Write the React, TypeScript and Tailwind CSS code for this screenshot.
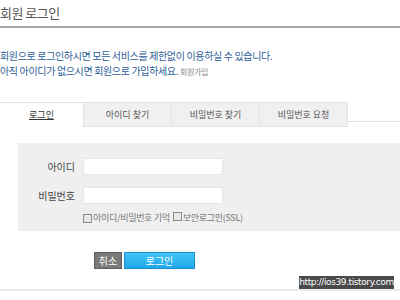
const font = "font-['Noto_Sans_CJK_KR','Noto_Sans',sans-serif]";

const tabs = [
    { label: '로그인', w: 'w-[84px]' },
    { label: '아이디 찾기', w: 'w-[88px]' },
    { label: '비밀번호 찾기', w: 'w-[88px]' },
    { label: '비밀번호 요청', w: 'w-[88px]' },
];

const CheckBox = () => (
    <span className="inline-block w-[9px] h-[9px] border border-[#8a8a8a] bg-[#e8e8e8] mr-[1px]"></span>
);

const App = () => {
    return (
        <div className={`relative w-[400px] h-[300px] overflow-hidden bg-white ${font}`}>
            {/* header */}
            <div className="h-[28px] flex items-center border-b-2 border-[#a6a6a6] text-[13px] tracking-[-0.5px] text-[#555]">
                회원 로그인
            </div>

            {/* intro */}
            <div className="mt-[20px] text-[10px] leading-[15px] tracking-[-0.35px] text-[#2c5d97] whitespace-nowrap">
                <p>회원으로 로그인하시면 모든 서비스를 제한없이 이용하실 수 있습니다.</p>
                <p>
                    아직 아이디가 없으시면 회원으로 가입하세요.{' '}
                    <span className="text-[8px] text-[#888]">회원가입</span>
                </p>
            </div>

            {/* tabs */}
            <div className="mt-[23px] flex items-start h-[25px]">
                {tabs.map((t, i) => (
                    <div
                        key={t.label}
                        className={
                            i === 0
                                ? `${t.w} h-[25px] flex items-center justify-center border-t border-r border-[#e2e2e2] bg-white text-[9px] text-[#333] underline`
                                : `${t.w} h-[25px] flex items-center justify-center border-t border-r border-b border-[#e2e2e2] bg-[#f0f0f0] text-[9px] text-[#555]`
                        }
                    >
                        {t.label}
                    </div>
                ))}
                <div className="flex-1 h-[20px] border-b border-[#e2e2e2]"></div>
            </div>

            {/* form panel */}
            <div className="mt-[16px] ml-[18px] h-[88px] bg-[#efefef] pt-[15px] text-[10px] text-[#444]">
                <div className="flex items-center h-[17px]">
                    <span className="w-[57px] text-right">아이디</span>
                    <input className="ml-[8px] w-[140px] h-[17px] bg-white border border-[#e6e6e6] outline-none" />
                </div>
                <div className="flex items-center h-[17px] mt-[12px]">
                    <span className="w-[57px] text-right">비밀번호</span>
                    <input type="password" className="ml-[8px] w-[140px] h-[17px] bg-white border border-[#e6e6e6] outline-none" />
                </div>
                <div className="flex items-center h-[16px] mt-[6px] ml-[65px] text-[9px] tracking-[-0.3px] text-[#777] whitespace-nowrap">
                    <CheckBox />
                    <span>아이디/비밀번호 기억</span>
                    <span className="ml-[3px]"><CheckBox /></span>
                    <span>보안로그인(SSL)</span>
                </div>
            </div>

            {/* buttons */}
            <div className="mt-[21px] flex items-center">
                <button className="ml-[94px] w-[28px] h-[17px] bg-[#7a7a7a] border border-[#5e5e5e] text-white text-[10px] leading-none">
                    취소
                </button>
                <button className="ml-[2px] w-[71px] h-[17px] bg-gradient-to-b from-[#41c6f8] to-[#1fa7e8] border border-[#1a8fd0] text-white text-[10px] leading-none">
                    로그인
                </button>
            </div>

            {/* bottom rule */}
            <div className="mt-[20px] border-b-2 border-[#ebebeb]"></div>

            {/* watermark */}
            <div className="absolute left-[299px] top-[276px] w-[95px] h-[13px] bg-[#4a4a4a] text-white text-[9px] leading-[13px] text-center font-['DejaVu_Sans',sans-serif] tracking-[-0.4px]">
                http://ios39.tistory.com
            </div>
        </div>
    );
};

export default App;
